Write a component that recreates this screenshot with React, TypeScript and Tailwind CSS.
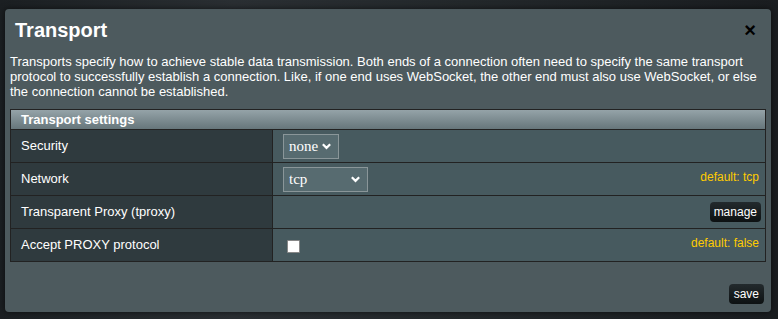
import { useState } from 'react';

const font = { fontFamily: '"Liberation Sans", Arial, sans-serif' };
const serif = { fontFamily: '"Liberation Serif", "Times New Roman", serif' };

function Chevron() {
  return (
    <svg
      viewBox="0 0 12 12"
      className="absolute right-[7px] top-1/2 -translate-y-1/2 w-[11px] h-[11px] pointer-events-none"
    >
      <path d="M2 4l4 4 4-4" fill="none" stroke="white" strokeWidth="2.4" />
    </svg>
  );
}

export default function App() {
  const [security, setSecurity] = useState('none');
  const [network, setNetwork] = useState('tcp');
  const [proxy, setProxy] = useState(false);

  const selectCls =
    'appearance-none h-[25px] border border-[#8a9699] bg-[#576b70] text-white text-[15px] pl-[5px] rounded-none outline-none';

  return (
    <div
      className="w-[778px] h-[319px] overflow-hidden bg-[linear-gradient(90deg,#1b1f22_0%,#2a2f33_30%,#23282b_60%,#1a1d20_100%)] pt-[9px] pl-[5px]"
      style={font}
    >
      <div className="w-[766px] h-[303px] bg-[#4d5a5e] rounded-[4px] shadow-[0_0_6px_rgba(0,0,0,0.6)] flex flex-col">
        <div className="flex items-center justify-between h-[41px] pl-[10px] pr-[15px] pt-[1px]">
          <h1 className="text-white font-bold text-[20px]">Transport</h1>
          <button className="text-black text-[20px] leading-none font-bold">×</button>
        </div>
        <p className="text-white text-[13px] leading-[15px] px-[5px] mt-[4px]">
          Transports specify how to achieve stable data transmission. Both ends of a connection often need to specify the same transport
          protocol to successfully establish a connection. Like, if one end uses WebSocket, the other end must also use WebSocket, or else
          the connection cannot be established.
        </p>
        <div className="mx-[5px] mt-[10px] border border-[#222] w-[756px]">
          <div className="h-[20px] bg-[linear-gradient(#95a3a8,#66767b)] text-white font-bold text-[13px] leading-[20px] pl-[10px] border-b border-[#222]">
            Transport settings
          </div>
          <div className="grid grid-cols-[262px_1fr] text-[13px] text-white">
            <div className="bg-[#2f3a3e] h-[33px] flex items-center pl-[10px] border-r border-b border-[#222]">Security</div>
            <div className="bg-[#475a5f] h-[33px] flex items-center pl-[10px] border-b border-[#222]">
              <div className="relative">
                <select
                  value={security}
                  onChange={(e) => setSecurity(e.target.value)}
                  className={selectCls + ' w-[56px]'}
                  style={serif}
                >
                  <option value="none">none</option>
                  <option value="tls">tls</option>
                  <option value="reality">reality</option>
                </select>
                <Chevron />
              </div>
            </div>
            <div className="bg-[#2f3a3e] h-[33px] flex items-center pl-[10px] border-r border-b border-[#222]">Network</div>
            <div className="bg-[#475a5f] h-[33px] flex items-center justify-between pl-[10px] pr-[6px] border-b border-[#222]">
              <div className="relative">
                <select
                  value={network}
                  onChange={(e) => setNetwork(e.target.value)}
                  className={selectCls + ' w-[85px]'}
                  style={serif}
                >
                  <option value="tcp">tcp</option>
                  <option value="kcp">kcp</option>
                  <option value="ws">ws</option>
                  <option value="grpc">grpc</option>
                </select>
                <Chevron />
              </div>
              <span className="text-[#ffcc00] text-[12px] self-start mt-[5px]">default: tcp</span>
            </div>
            <div className="bg-[#2f3a3e] h-[33px] flex items-center pl-[10px] border-r border-b border-[#222]">Transparent Proxy (tproxy)</div>
            <div className="bg-[#475a5f] h-[33px] flex items-center justify-end pr-[4px] border-b border-[#222]">
              <button className="h-[20px] px-[4px] rounded-[4px] bg-[linear-gradient(#232a2d,#0d1112)] text-white text-[12px] leading-[20px]">
                manage
              </button>
            </div>
            <div className="bg-[#2f3a3e] h-[32px] flex items-center pl-[10px] border-r border-[#222]">Accept PROXY protocol</div>
            <div className="bg-[#475a5f] h-[32px] flex items-center justify-between pl-[14px] pr-[6px]">
              <input
                type="checkbox"
                checked={proxy}
                onChange={(e) => setProxy(e.target.checked)}
                className="appearance-none w-[13px] h-[13px] bg-white border border-[#888] rounded-[1px] mt-[2px]"
              />
              <span className="text-[#ffcc00] text-[12px] self-start mt-[5px]">default: false</span>
            </div>
          </div>
        </div>
        <div className="flex justify-end pr-[7px] mt-[22px]">
          <button className="h-[20px] px-[5px] rounded-[4px] bg-[linear-gradient(#232a2d,#0d1112)] text-white text-[12px] leading-[20px]">
            save
          </button>
        </div>
      </div>
    </div>
  );
}
